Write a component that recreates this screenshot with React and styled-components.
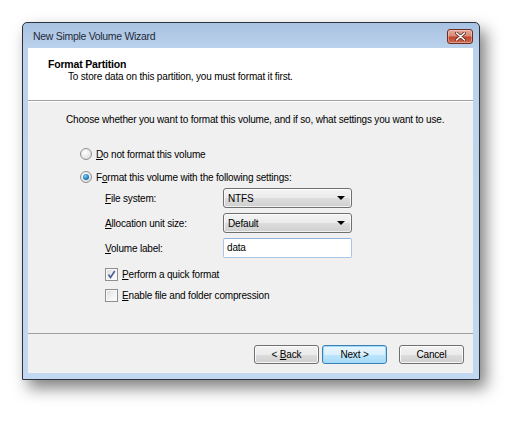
import React from 'react'
import styled, { createGlobalStyle } from 'styled-components'

const GlobalStyle = createGlobalStyle`
  html, body {
    margin: 0;
    padding: 0;
    background: #ffffff;
  }
`

const Page = styled.div`
  width: 525px;
  height: 423px;
  padding: 22px 0 0 22px;
  box-sizing: border-box;
  font-family: "Liberation Sans", Arial, sans-serif;
  font-size: 10px;
  letter-spacing: -0.18px;
  color: #000;
  white-space: nowrap;
`

const Window = styled.div`
  width: 458px;
  height: 358px;
  box-sizing: border-box;
  border: 1px solid #2a323c;
  border-radius: 5px 5px 0 0;
  background: linear-gradient(to bottom, #a8c2e2 0px, #bcd2ec 26px, #c2d8f0 100%);
  padding: 0 6px 6px 5px;
  display: flex;
  flex-direction: column;
  box-shadow: 6px 8px 16px rgba(0, 0, 0, 0.5);
`

const TitleBar = styled.div`
  height: 25px;
  display: flex;
  align-items: center;
  justify-content: space-between;
  padding-left: 5px;
`

const Title = styled.span`
  font-size: 10.5px;
  letter-spacing: -0.3px;
  color: #1e2a38;
`

const CloseButton = styled.div`
  width: 26px;
  height: 15px;
  margin-top: 1px;
  box-sizing: border-box;
  border: 1px solid #6b2d22;
  border-radius: 3px;
  background: linear-gradient(to bottom, #e8a597 0%, #d98a78 45%, #c2452c 55%, #cf6a4e 100%);
  display: flex;
  align-items: center;
  justify-content: center;
  box-shadow: inset 0 0 0 1px rgba(255, 255, 255, 0.35);
`

const Client = styled.div`
  flex: 1;
  background: #f0f0f0;
  display: flex;
  flex-direction: column;
`

const Header = styled.div`
  height: 53px;
  box-sizing: border-box;
  background: #ffffff;
  border-bottom: 1px solid #a0a0a0;
  padding: 9px 0 0 20px;
`

const HeaderTitle = styled.div`
  font-weight: bold;
  font-size: 10.5px;
  line-height: 14px;
`

const HeaderSub = styled.div`
  padding-left: 20px;
  line-height: 12px;
`

const Body = styled.div`
  flex: 1;
  display: flex;
  flex-direction: column;
  padding: 10px 0 0 38px;
  border-top: 1px solid #ffffff;
`

const Intro = styled.div`
  line-height: 16px;
  margin-bottom: 18px;
`

const Group = styled.div`
  display: flex;
  flex-direction: column;
  gap: ${p => p.$gap}px;
  padding-left: ${p => p.$indent}px;
  margin-top: ${p => p.$top || 0}px;
`

const OptionRow = styled.label`
  display: flex;
  align-items: center;
  height: 16px;
  gap: 4px;
`

const Radio = styled.span`
  width: 12px;
  height: 12px;
  box-sizing: border-box;
  border-radius: 50%;
  border: 1px solid #8f8f8f;
  background: radial-gradient(circle at 40% 35%, #ffffff 0%, #e6e6e6 60%, #cfcfcf 100%);
  display: flex;
  align-items: center;
  justify-content: center;

  &::after {
    content: '';
    display: ${p => (p.$checked ? 'block' : 'none')};
    width: 6px;
    height: 6px;
    border-radius: 50%;
    background: radial-gradient(circle at 40% 35%, #7fd3f7 0%, #1f82c0 55%, #0b4f86 100%);
  }
`

const Check = styled.span`
  width: 13px;
  height: 13px;
  box-sizing: border-box;
  border: 1px solid #8f8f8f;
  background: linear-gradient(135deg, #dcdcdc 0%, #f4f4f4 60%, #ffffff 100%);
  box-shadow: inset 0 0 0 1px #f8f8f8;
  display: flex;
  align-items: center;
  justify-content: center;
`

const FieldRow = styled.div`
  display: flex;
  align-items: center;
  height: 20px;
`

const FieldLabel = styled.span`
  width: 118px;
`

const Select = styled.div`
  width: 129px;
  height: 20px;
  box-sizing: border-box;
  border: 1px solid #707070;
  border-radius: 3px;
  background: linear-gradient(to bottom, #f4f4f4 0%, #ebebeb 50%, #dddddd 51%, #cfcfcf 100%);
  box-shadow: inset 0 0 0 1px rgba(255, 255, 255, 0.7);
  display: flex;
  align-items: center;
  justify-content: space-between;
  padding: 0 6px 0 4px;
`

const Arrow = styled.span`
  width: 0;
  height: 0;
  border-left: 4px solid transparent;
  border-right: 4px solid transparent;
  border-top: 4px solid #000;
`

const TextBox = styled.div`
  width: 129px;
  height: 20px;
  box-sizing: border-box;
  border: 1px solid #a9c6e4;
  border-top-color: #8fb2d8;
  border-radius: 2px;
  background: #ffffff;
  padding: 1px 0 0 3px;
  line-height: 15px;
`

const Footer = styled.div`
  height: 40px;
  box-sizing: border-box;
  border-top: 1px solid #a0a0a0;
  display: flex;
  align-items: center;
  justify-content: flex-end;
  padding: 0 9px 0 0;
`

const Button = styled.div`
  width: ${p => p.$w || 65}px;
  height: 19px;
  margin-left: ${p => p.$gap || 0}px;
  box-sizing: border-box;
  border: 1px solid ${p => (p.$default ? '#3c7fb1' : '#707070')};
  border-radius: 3px;
  background: ${p =>
    p.$default
      ? 'linear-gradient(to bottom, #eaf6fd 0%, #d9f0fc 50%, #bee6fd 51%, #a7d9f5 100%)'
      : 'linear-gradient(to bottom, #f2f2f2 0%, #ebebeb 50%, #dddddd 51%, #cfcfcf 100%)'};
  box-shadow: inset 0 0 0 1px ${p => (p.$default ? '#9fdcfa' : 'rgba(255,255,255,0.8)')};
  display: flex;
  align-items: center;
  justify-content: center;
  margin-top: 1px;
  white-space: pre;
`

const U = styled.span`
  text-decoration: underline;
  text-underline-offset: 1px;
`

export default function App () {
  return (
    <Page>
      <GlobalStyle />
      <Window>
        <TitleBar>
          <Title>New Simple Volume Wizard</Title>
          <CloseButton>
            <svg width="11" height="9" viewBox="0 0 11 9">
              <path d="M1.5 1 L9.5 8 M9.5 1 L1.5 8" stroke="#5a2a20" strokeWidth="3" strokeLinecap="round" />
              <path d="M1.5 1 L9.5 8 M9.5 1 L1.5 8" stroke="#ffffff" strokeWidth="1.6" strokeLinecap="round" />
            </svg>
          </CloseButton>
        </TitleBar>
        <Client>
          <Header>
            <HeaderTitle>Format Partition</HeaderTitle>
            <HeaderSub>To store data on this partition, you must format it first.</HeaderSub>
          </Header>
          <Body>
            <Intro>Choose whether you want to format this volume, and if so, what settings you want to use.</Intro>
            <Group $gap={7} $indent={14}>
              <OptionRow>
                <Radio />
                <span><U>D</U>o not format this volume</span>
              </OptionRow>
              <OptionRow>
                <Radio $checked />
                <span>F<U>o</U>rmat this volume with the following settings:</span>
              </OptionRow>
            </Group>
            <Group $gap={5} $indent={39} $top={3}>
              <FieldRow>
                <FieldLabel><U>F</U>ile system:</FieldLabel>
                <Select>
                  <span>NTFS</span>
                  <Arrow />
                </Select>
              </FieldRow>
              <FieldRow>
                <FieldLabel><U>A</U>llocation unit size:</FieldLabel>
                <Select>
                  <span>Default</span>
                  <Arrow />
                </Select>
              </FieldRow>
              <FieldRow>
                <FieldLabel><U>V</U>olume label:</FieldLabel>
                <TextBox>data</TextBox>
              </FieldRow>
            </Group>
            <Group $gap={5} $indent={39} $top={8}>
              <OptionRow>
                <Check>
                  <svg width="9" height="9" viewBox="0 0 9 9">
                    <path d="M1.5 4.5 L3.5 7.5 L7.8 1" fill="none" stroke="#4a5f97" strokeWidth="1.6" />
                  </svg>
                </Check>
                <span><U>P</U>erform a quick format</span>
              </OptionRow>
              <OptionRow>
                <Check />
                <span><U>E</U>nable file and folder compression</span>
              </OptionRow>
            </Group>
          </Body>
          <Footer>
            <Button>{'< '}<U>B</U>ack</Button>
            <Button $default $gap={3}>{'Next >'}</Button>
            <Button $gap={12}>Cancel</Button>
          </Footer>
        </Client>
      </Window>
    </Page>
  )
}
